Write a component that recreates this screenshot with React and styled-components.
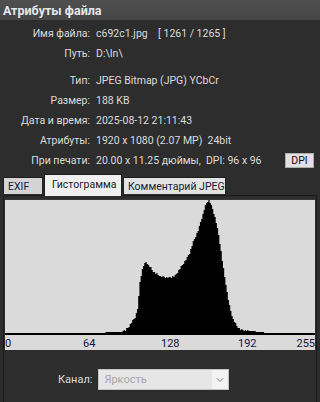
import React, { useMemo } from "react";
import styled, { createGlobalStyle } from "styled-components";
import { ChevronDown } from "lucide-react";

const GlobalStyle = createGlobalStyle`
  html, body {
    margin: 0;
    padding: 0;
    background: #2d2d2d;
  }
  body {
    font-family: Roboto, "Liberation Sans", Arial, sans-serif;
    font-size: 10.5px;
  }
`;

const WindowStyled = styled.div`
  width: 320px;
  height: 402px;
  display: flex;
  flex-direction: column;
  background: #2d2d2d;
  overflow: hidden;
`;

const TitleBar = styled.div`
  height: 20px;
  display: flex;
  align-items: center;
  padding-left: 3px;
  background: linear-gradient(#4f4f4f, #464646);
  color: #e4e6ee;
  font-weight: bold;
  font-size: 12.5px;
  flex-shrink: 0;
`;

const Info = styled.div`
  display: flex;
  flex-direction: column;
  padding-top: 3px;
`;

const Row = styled.div`
  display: flex;
  align-items: center;
  height: 20px;
  margin-top: ${(p) => (p.$spaced ? "7px" : "0")};
  color: #dcdcdc;
`;

const Label = styled.span`
  width: 90px;
  text-align: right;
  flex-shrink: 0;
`;

const Value = styled.span`
  flex: 1;
  padding-left: 6px;
  white-space: pre;
`;

const DpiButton = styled.button`
  width: 29px;
  height: 15px;
  margin-right: 6px;
  padding: 0;
  border: 1px solid #adadad;
  background: #e1e1e1;
  color: #111;
  font-family: inherit;
  font-size: 10.5px;
  line-height: 13px;
`;

const TabStrip = styled.div`
  display: flex;
  align-items: flex-end;
  gap: 1px;
  height: 21px;
  padding: 4px 0 0 3px;
  flex-shrink: 0;
  position: relative;
  z-index: 1;
`;

const Tab = styled.div`
  width: ${(p) => p.$w}px;
  height: ${(p) => (p.$active ? "22px" : "17px")};
  margin-bottom: ${(p) => (p.$active ? "-1px" : "1px")};
  box-sizing: border-box;
  display: flex;
  align-items: center;
  padding-left: ${(p) => (p.$active ? "7px" : "4px")};
  padding-bottom: ${(p) => (p.$active ? "3px" : "0")};
  background: ${(p) => (p.$active ? "#f0f0f0" : p.$dim ? "#d4d4d4" : "#e3e3e3")};
  color: ${(p) => (p.$active ? "#222" : "#141a3a")};
  border: 1px solid #1e1e1e;
  border-bottom: none;
  font-size: 10.5px;
  white-space: nowrap;
  overflow: hidden;
`;

const Panel = styled.div`
  flex: 1;
  margin: 0 3px;
  border: 1px solid #1b1b1b;
  border-bottom: none;
  display: flex;
  flex-direction: column;
  padding-top: 3px;
`;

const Plot = styled.div`
  margin: 0 1px;
  height: 150px;
  background: #dadada;
  border-top: 1px solid #3a3a3a;
`;

const ChannelRow = styled.div`
  display: flex;
  align-items: center;
  gap: 6px;
  padding-left: 54px;
  margin-top: 19px;
  color: #dcdcdc;
  font-size: 11px;
`;

const Select = styled.div`
  width: 131px;
  height: 21px;
  box-sizing: border-box;
  border: 1px solid #c4c4c4;
  background: #e6e6e6;
  display: flex;
  align-items: center;
`;

const SelectText = styled.span`
  flex: 1;
  padding-left: 5px;
  color: #a6a6a6;
`;

const SelectArrow = styled.span`
  width: 16px;
  align-self: stretch;
  display: flex;
  align-items: center;
  justify-content: center;
  background: #f3f3f3;
  color: #555;
`;

// curve outline in plot pixels (x, top y); baseline is at 134
const curve = [
  [0, 134], [82, 134], [84, 133], [117, 132], [121, 130], [125, 125],
  [130, 118], [133, 107], [135, 82], [137, 71], [139, 65], [141, 62],
  [145, 67], [149, 72], [155, 76], [163, 78], [170, 76], [175, 69],
  [180, 61], [185, 53], [188, 42], [193, 31], [198, 14], [201, 4],
  [204, 0], [207, 7], [211, 21], [214, 36], [217, 58], [220, 78],
  [223, 98], [225, 108], [228, 119], [232, 126], [235, 129], [245, 131],
  [257, 132], [262, 133], [310, 134],
];

const topAt = (x) => {
  for (let i = 1; i < curve.length; i++) {
    const [x1, y1] = curve[i];
    const [x0, y0] = curve[i - 1];
    if (x <= x1) return y0 + ((y1 - y0) * (x - x0)) / (x1 - x0 || 1);
  }
  return 134;
};

const Histogram = () => {
  const d = useMemo(() => {
    const bw = 310 / 256;
    let s = "M0,135";
    for (let i = 0; i < 256; i++) {
      const x0 = i * bw;
      let y = topAt(x0 + bw / 2);
      if (y < 131) y += ((i * 37) % 5) * 0.4 - 0.8;
      y = Math.max(0, Math.round(y));
      s += ` L${x0.toFixed(2)},${y} L${(x0 + bw).toFixed(2)},${y}`;
    }
    return s + " L310,135 Z";
  }, []);
  const ticks = [
    { v: "0", x: 0, a: "start" },
    { v: "64", x: 78, a: "start" },
    { v: "128", x: 156, a: "start" },
    { v: "192", x: 233, a: "start" },
    { v: "255", x: 310, a: "end" },
  ];
  return (
    <svg width="310" height="149" viewBox="0 0 310 149" style={{ display: "block" }}>
      <path d={d} fill="#000" />
      <rect x="0" y="133" width="310" height="2" fill="#000" />
      {ticks.map((t) => (
        <text
          key={t.v}
          x={t.x}
          y="147"
          fontSize="11"
          fill="#14143a"
          textAnchor={t.a}
          fontFamily="Roboto, 'Liberation Sans', sans-serif"
        >
          {t.v}
        </text>
      ))}
    </svg>
  );
};

const rows = [
  { label: "Имя файла:", value: "c692c1.jpg    [ 1261 / 1265 ]" },
  { label: "Путь:", value: "D:\\In\\" },
  { label: "Тип:", value: "JPEG Bitmap (JPG) YCbCr", spaced: true },
  { label: "Размер:", value: "188 KB" },
  { label: "Дата и время:", value: "2025-08-12 21:11:43" },
  { label: "Атрибуты:", value: "1920 x 1080 (2.07 MP)  24bit" },
];

const App = () => (
  <WindowStyled>
    <GlobalStyle />
    <TitleBar>Атрибуты файла</TitleBar>
    <Info>
      {rows.map((r) => (
        <Row key={r.label} $spaced={r.spaced}>
          <Label>{r.label}</Label>
          <Value>{r.value}</Value>
        </Row>
      ))}
      <Row>
        <Label>При печати:</Label>
        <Value>20.00 x 11.25 дюймы,  DPI: 96 x 96</Value>
        <DpiButton>DPI</DpiButton>
      </Row>
    </Info>
    <TabStrip>
      <Tab $w={40} $dim>EXIF</Tab>
      <Tab $w={78} $active>Гистограмма</Tab>
      <Tab $w={103}>Комментарий JPEG</Tab>
    </TabStrip>
    <Panel>
      <Plot>
        <Histogram />
      </Plot>
      <ChannelRow>
        <span>Канал:</span>
        <Select>
          <SelectText>Яркость</SelectText>
          <SelectArrow>
            <ChevronDown size={12} strokeWidth={1.5} />
          </SelectArrow>
        </Select>
      </ChannelRow>
    </Panel>
  </WindowStyled>
);

export default App;
